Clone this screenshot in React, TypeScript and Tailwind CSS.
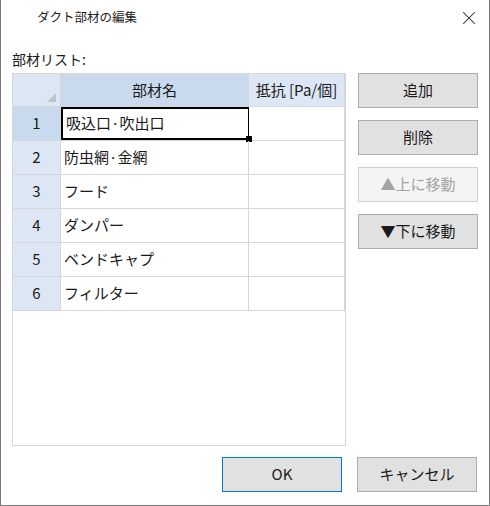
import { X } from "lucide-react";

const ROWS = ["吸込口·吹出口", "防虫網·金網", "フード", "ダンパー", "ベンドキャプ", "フィルター"];

const FONT = { fontFamily: '"Noto Sans CJK JP", "Noto Sans", sans-serif' };

function SideButton({ label, disabled, primary }: { label: string; disabled?: boolean; primary?: boolean }) {
  return (
    <button
      disabled={disabled}
      className={`flex h-[35px] w-[120px] items-center justify-center border text-[15px] ${
        disabled
          ? "border-[#cfcfcf] bg-[#f4f4f4] text-[#a3a3a3]"
          : primary
            ? "border-[#0078d7] bg-[#e1e1e1] text-[#1a1a1a]"
            : "border-[#adadad] bg-[#e1e1e1] text-[#1a1a1a]"
      }`}
    >
      {label}
    </button>
  );
}

export default function App() {
  return (
    <div style={FONT} className="relative h-[506px] w-[490px] border border-t-0 border-[#7a7a7a] bg-white text-[#1a1a1a]">
      {/* title bar */}
      <div className="flex h-[35px] items-center justify-between pl-[36px] pr-[9px]">
        <span className="text-[12.5px] text-[#222]">ダクト部材の編集</span>
        <X size={22} strokeWidth={1.1} className="text-[#222]" />
      </div>

      <div className="px-[11px]">
        <div className="mt-[14px] text-[14px] leading-[20px]">部材リスト:</div>

        <div className="mt-[4px] flex gap-[12px]">
          {/* grid */}
          <div className="h-[373px] w-[335px] border border-[#d6d6d6] bg-white text-[15px]">
            <div className="flex h-[33px] border-b border-[#d6d6d6]">
              <div className="relative w-[48px] border-r border-[#d6d6d6] bg-[#dce6f4]">
                <div className="absolute bottom-[4px] right-[4px] h-0 w-0 border-b-[9px] border-l-[9px] border-b-[#b8c4d2] border-l-transparent" />
              </div>
              <div className="flex w-[188px] items-center justify-center border-r border-[#d6d6d6] bg-[#c9d9ee]">部材名</div>
              <div className="flex w-[96px] items-center justify-center border-r border-[#d6d6d6] bg-[#dce6f4]">抵抗 [Pa/個]</div>
            </div>
            {ROWS.map((name, i) => (
              <div key={name} className="flex h-[34px] border-b border-[#d6d6d6]">
                <div
                  className={`flex w-[48px] items-center justify-center border-r border-[#d6d6d6] ${
                    i === 0 ? "bg-[#c9d9ee]" : "bg-[#dce6f4]"
                  }`}
                >
                  {i + 1}
                </div>
                <div
                  className={`relative flex w-[188px] items-center border-r pl-[3px] ${
                    i === 0 ? "border-2 border-black" : "border-[#d6d6d6]"
                  }`}
                >
                  {name}
                  {i === 0 && <div className="absolute -bottom-[4px] -right-[4px] h-[6px] w-[6px] bg-black" />}
                </div>
                <div className="w-[96px] border-r border-[#d6d6d6]" />
              </div>
            ))}
          </div>

          {/* side buttons */}
          <div className="flex flex-col gap-[12px]">
            <SideButton label="追加" />
            <SideButton label="削除" />
            <SideButton label="▲上に移動" disabled />
            <SideButton label="▼下に移動" />
          </div>
        </div>

        <div className="mt-[11px] flex justify-end gap-[15px] pr-[1px]">
          <SideButton label="OK" primary />
          <SideButton label="キャンセル" />
        </div>
      </div>
    </div>
  );
}
